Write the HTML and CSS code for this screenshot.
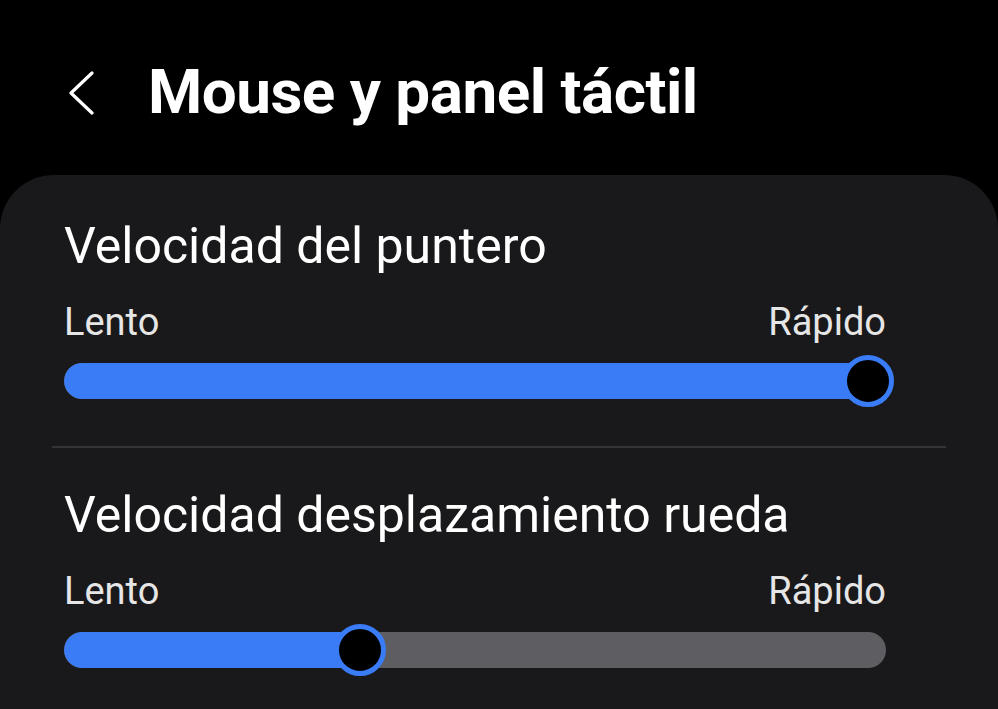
FILE: index.html
```html
<!DOCTYPE html>
<html lang="es">
<head>
  <meta charset="UTF-8">
  <title>Mouse y panel táctil</title>
  <link rel="stylesheet" href="styles.css">
</head>
<body>
  <header class="topbar">
    <svg class="back" width="30" height="44" viewBox="0 0 30 44">
      <polyline points="26,2 5,22 26,42" fill="none" stroke="#fff" stroke-width="3.2" stroke-linecap="round" stroke-linejoin="round"/>
    </svg>
    <h1>Mouse y panel táctil</h1>
  </header>

  <main class="card">
    <section class="setting">
      <h2>Velocidad del puntero</h2>
      <div class="labels"><span>Lento</span><span>Rápido</span></div>
      <div class="slider">
        <div class="track">
          <div class="fill" style="width: 100%"></div>
        </div>
        <div class="rail">
          <div class="thumb" style="left: 100%"></div>
        </div>
      </div>
    </section>

    <hr class="divider">

    <section class="setting">
      <h2>Velocidad desplazamiento rueda</h2>
      <div class="labels"><span>Lento</span><span>Rápido</span></div>
      <div class="slider">
        <div class="track">
          <div class="fill" style="width: 36%"></div>
        </div>
        <div class="rail">
          <div class="thumb" style="left: 35.4%"></div>
        </div>
      </div>
    </section>
  </main>
</body>
</html>
```

FILE: styles.css
```css
body {
  margin: 0;
  background-color: #000;
  color: #fff;
  font-family: Roboto, "Noto Sans", sans-serif;
  overflow: hidden;
}
.topbar {
  height: 175px;
  display: flex;
  align-items: center;
  padding: 8px 0 0 66px;
  box-sizing: border-box;
}
.back {
  margin-top: 2px;
}
.topbar h1 {
  margin: 0 0 0 52px;
  font-size: 62px;
  font-weight: 700;
  letter-spacing: -0.5px;
}
.card {
  background-color: #19191b;
  border-radius: 54px 54px 0 0;
  padding: 38px 0 60px 52px;
  min-height: 600px;
}
.setting {
  padding: 0 112px 0 12px;
}
.setting h2 {
  margin: 0;
  font-size: 50px;
  font-weight: 400;
  line-height: 66px;
}
.labels {
  display: flex;
  justify-content: space-between;
  font-size: 38px;
  color: #e6e6e6;
  margin-top: 19px;
  line-height: 48px;
}
.slider {
  position: relative;
  margin-top: 17px;
  height: 36px;
}
.track {
  height: 36px;
  border-radius: 18px;
  background-color: #5e5e62;
  overflow: hidden;
}
.fill {
  height: 100%;
  background-color: #3a7cf6;
  border-radius: 18px;
}
.rail {
  position: absolute;
  top: 0;
  bottom: 0;
  left: 18px;
  right: 18px;
}
.thumb {
  position: absolute;
  top: 50%;
  width: 42px;
  height: 42px;
  margin: -26px 0 0 -26px;
  border: 5px solid #3a7cf6;
  border-radius: 50%;
  background-color: #000;
}
.divider {
  border: none;
  border-top: 2px solid #343436;
  margin: 47px 52px 34px 0;
}
```
